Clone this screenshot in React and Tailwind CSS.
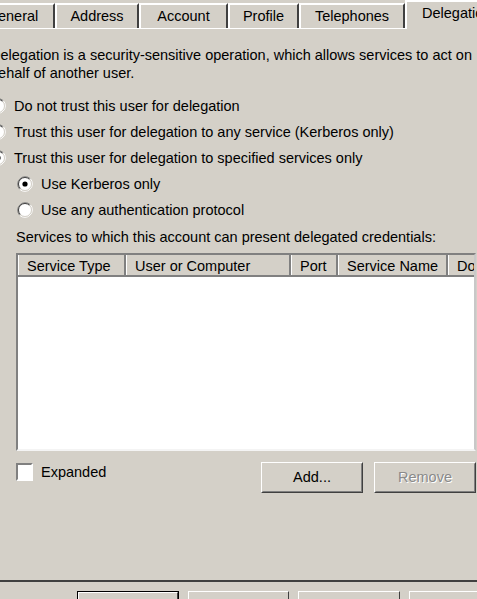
import React from "react";

const font = { fontFamily: '"Liberation Sans", Arial, sans-serif' };

function Radio({ checked }) {
  return (
    <svg width="16" height="16" viewBox="0 0 16 16" className="shrink-0">
      <circle cx="8" cy="8" r="6.5" fill="#ffffff" />
      <path d="M2.7 13.3 A7.5 7.5 0 0 1 13.3 2.7" fill="none" stroke="#808080" strokeWidth="1" />
      <path d="M3.4 12.6 A6.5 6.5 0 0 1 12.6 3.4" fill="none" stroke="#404040" strokeWidth="1" />
      <path d="M13.3 2.7 A7.5 7.5 0 0 1 2.7 13.3" fill="none" stroke="#ffffff" strokeWidth="1" />
      <path d="M12.6 3.4 A6.5 6.5 0 0 1 3.4 12.6" fill="none" stroke="#d4d0c8" strokeWidth="1" />
      {checked && <circle cx="8" cy="8" r="2.6" fill="#000000" />}
    </svg>
  );
}

function RadioRow({ label, checked, indent }) {
  return (
    <div className={`flex items-center h-[26px] gap-[8px] whitespace-nowrap ${indent ? "pl-[27px]" : ""}`}>
      <Radio checked={checked} />
      <span>{label}</span>
    </div>
  );
}

function Tab({ label, w, selected }) {
  if (selected) {
    return (
      <div
        className={`${w} h-[29px] -mb-px relative z-10 bg-[#d4d0c8] border-t-2 border-l-2 border-white flex items-start pt-[4px] pl-[15px] shrink-0 whitespace-nowrap`}
      >
        {label}
      </div>
    );
  }
  return (
    <div
      className={`${w} h-[25px] border-t-2 border-l-2 border-white border-r-2 border-r-[#404040] flex items-center justify-center shrink-0 pb-[1px] whitespace-nowrap`}
    >
      {label}
    </div>
  );
}

function Button({ label, disabled, w }) {
  return (
    <div
      className={`${w} h-[31px] border border-t-white border-l-white border-r-[#404040] border-b-[#404040] shrink-0`}
    >
      <div className="w-full h-full border border-t-[#d4d0c8] border-l-[#d4d0c8] border-r-[#808080] border-b-[#808080] flex items-center justify-center">
        {disabled ? (
          <span className="text-[#8a8a8a] [text-shadow:1px_1px_0_#ffffff]">{label}</span>
        ) : (
          <span>{label}</span>
        )}
      </div>
    </div>
  );
}

function HeaderCell({ label, w, last }) {
  return (
    <div
      className={`${w} h-full shrink-0 border-l border-l-white ${last ? "" : "border-r-2 border-r-[#808080]"} flex items-center pl-[8px] pt-[3px] whitespace-nowrap overflow-hidden`}
    >
      {label}
    </div>
  );
}

export default function App() {
  return (
    <div
      className="w-[477px] h-[599px] overflow-hidden bg-[#d4d0c8] text-[14.5px] text-black leading-none"
      style={font}
    >
      {/* TAB STRIP */}
      <div className="flex items-end h-[28px] ml-[-30px] w-[560px]">
        <Tab label="General" w="w-[85px]" />
        <Tab label="Address" w="w-[84px]" />
        <Tab label="Account" w="w-[89px]" />
        <Tab label="Profile" w="w-[71px]" />
        <Tab label="Telephones" w="w-[106px]" />
        <Tab label="Delegation" w="w-[125px]" selected />
      </div>

      {/* PANEL */}
      <div className="h-[554px] border-t border-white border-b-2 border-b-[#404040] w-[520px] ml-[-10px]">
        <div className="pt-[17px] leading-[18px] whitespace-nowrap">
          <p>Delegation is a security-sensitive operation, which allows services to act on</p>
          <p>behalf of another user.</p>
        </div>

        <div className="mt-[11px]">
          <RadioRow label="Do not trust this user for delegation" />
          <RadioRow label="Trust this user for delegation to any service (Kerberos only)" />
          <RadioRow label="Trust this user for delegation to specified services only" checked />
          <RadioRow label="Use Kerberos only" checked indent />
          <RadioRow label="Use any authentication protocol" indent />
        </div>

        <div className="pl-[26px]">
          <div className="h-[28px] flex items-center whitespace-nowrap">
            Services to which this account can present delegated credentials:
          </div>

          {/* LIST VIEW */}
          <div className="mt-[2px] w-[460px] h-[198px] border-2 border-t-[#808080] border-l-[#808080] border-b-[#f4f4f4] border-r-[#c8c8c8] bg-white overflow-hidden">
            <div className="flex h-[22px] bg-[#d4d0c8] border-b-2 border-b-[#808080]">
              <HeaderCell label="Service Type" w="w-[108px]" />
              <HeaderCell label="User or Computer" w="w-[165px]" />
              <HeaderCell label="Port" w="w-[47px]" />
              <HeaderCell label="Service Name" w="w-[110px]" />
              <HeaderCell label="Domain" w="w-[60px]" last />
            </div>
          </div>

          <div className="mt-[11px] flex items-start w-[460px]">
            <div className="flex items-center gap-[8px] flex-1 pt-[1px]">
              <div className="w-[17px] h-[18px] border-2 border-t-[#808080] border-l-[#808080] border-b-white border-r-white bg-white" />
              <span>Expanded</span>
            </div>
            <Button label="Add..." w="w-[102px]" />
            <div className="w-[11px] shrink-0" />
            <Button label="Remove" w="w-[102px]" disabled />
          </div>
        </div>
      </div>

      {/* DIALOG BUTTONS */}
      <div className="flex mt-[9px] ml-[77px] gap-[9px] w-[480px]">
        <div className="w-[102px] h-[31px] border border-black shrink-0">
          <div className="w-full h-full border border-t-white border-l-white border-r-[#404040] border-b-[#404040]" />
        </div>
        <div className="w-[101px] h-[31px] border border-t-white border-l-white border-r-[#404040] border-b-[#404040] shrink-0" />
        <div className="w-[102px] h-[31px] border border-t-white border-l-white border-r-[#404040] border-b-[#404040] shrink-0" />
        <div className="w-[102px] h-[31px] border border-t-white border-l-white border-r-[#404040] border-b-[#404040] shrink-0" />
      </div>
    </div>
  );
}
